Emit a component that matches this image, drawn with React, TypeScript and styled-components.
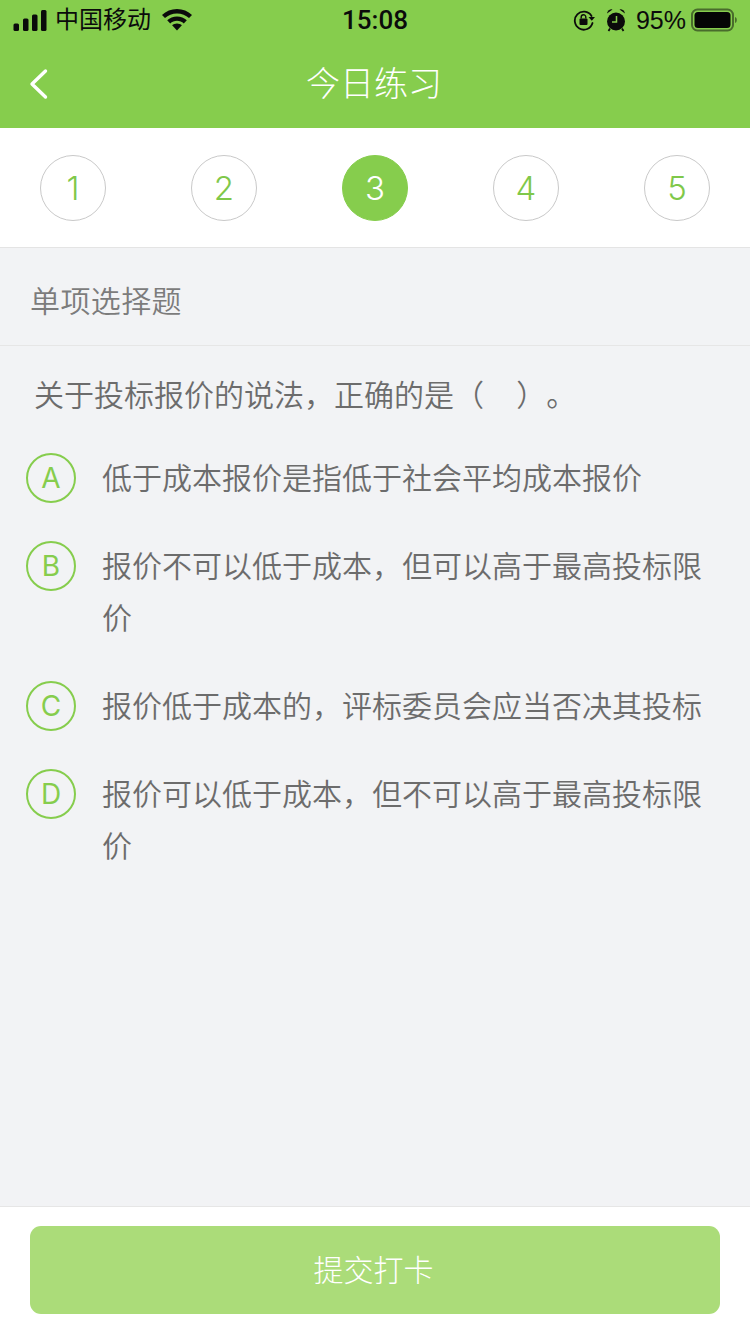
import React from "react";
import styled, { createGlobalStyle } from "styled-components";

const GlobalStyle = createGlobalStyle`
  html, body {
    margin: 0;
    padding: 0;
    background: #f2f3f5;
  }
  * {
    box-sizing: border-box;
  }
`;

const FONT = `"Liberation Sans", "Noto Sans CJK SC", sans-serif`;
const LATIN_LIGHT = `Inter, "Liberation Sans", sans-serif`;

const steps = [1, 2, 3, 4, 5];
const activeStep = 3;

const options = [
  { key: "A", text: "低于成本报价是指低于社会平均成本报价" },
  { key: "B", text: "报价不可以低于成本，但可以高于最高投标限价" },
  { key: "C", text: "报价低于成本的，评标委员会应当否决其投标" },
  { key: "D", text: "报价可以低于成本，但不可以高于最高投标限价" },
];

const SignalIcon = () => (
  <svg width="34" height="21" viewBox="0 0 34 21" fill="#0b0b0b">
    <rect x="0.500" y="13.500" width="5.500" height="7.500" rx="1.500" />
    <rect x="10" y="8.500" width="5.500" height="12.500" rx="1.500" />
    <rect x="19" y="4.500" width="5.500" height="16.500" rx="1.500" />
    <rect x="28" y="0" width="5.500" height="21" rx="1.500" />
  </svg>
);

const WifiIcon = () => (
  <svg width="30" height="22" viewBox="0 0 30 22" fill="#0b0b0b">
    <path d="M15 0C9.200 0 4 2.200 0 5.900l3 3.100C6.100 6.100 10.300 4.400 15 4.400s8.900 1.700 12 4.600l3-3.100C26 2.200 20.800 0 15 0z" />
    <path d="M15 7.400c-3.800 0-7.200 1.400-9.800 3.800l3 3.200c1.800-1.700 4.200-2.700 6.800-2.700s5 1 6.800 2.700l3-3.200c-2.600-2.400-6-3.800-9.800-3.800z" />
    <path d="M15 14.400c-1.900 0-3.600 0.700-4.900 1.900L15 21.500l4.900-5.200c-1.300-1.200-3-1.900-4.900-1.900z" />
  </svg>
);

const RotationLockIcon = () => (
  <svg width="22" height="22" viewBox="0 0 22 22" fill="none">
    <path
      d="M18.500 7A9 9 0 1 0 19.500 14"
      stroke="#0b0b0b"
      strokeWidth="1.800"
      strokeLinecap="round"
    />
    <path d="M15.500 8h6.500l-3.200 3.800z" fill="#0b0b0b" />
    <rect x="6.500" y="9.500" width="8" height="6.500" rx="1" fill="#0b0b0b" />
    <path
      d="M8.200 9.500V8a2.300 2.300 0 0 1 4.600 0v1.500"
      stroke="#0b0b0b"
      strokeWidth="1.400"
    />
  </svg>
);

const AlarmIcon = () => (
  <svg width="22" height="24" viewBox="0 0 22 24" fill="none">
    <circle cx="11" cy="13.500" r="9" fill="#0b0b0b" />
    <path d="M2 5.500 A4.500 4.500 0 0 1 7.500 1.500 Z" fill="#0b0b0b" />
    <path d="M20 5.500 A4.500 4.500 0 0 0 14.500 1.500 Z" fill="#0b0b0b" />
    <path d="M5 20.500l-1.500 2.500M17 20.500l1.500 2.500" stroke="#0b0b0b" strokeWidth="1.800" />
    <path d="M11.500 8V14H7" stroke="#86cd4d" strokeWidth="1.500" />
  </svg>
);

const BatteryIcon = () => (
  <svg width="46" height="24" viewBox="0 0 46 24" fill="none">
    <rect
      x="1"
      y="1.500"
      width="41"
      height="21"
      rx="5.500"
      stroke="#0b0b0b"
      strokeOpacity="0.5"
      strokeWidth="2"
    />
    <rect x="3.500" y="4" width="36" height="16" rx="3.500" fill="#050505" />
    <path d="M44 9c1.200 0.400 1.800 1.500 1.800 3s-0.600 2.600-1.800 3z" fill="#0b0b0b" fillOpacity="0.5" />
  </svg>
);

const BackIcon = () => (
  <svg width="20" height="32" viewBox="0 0 20 32" fill="none">
    <path
      d="M16.500 3L3 16l13.500 13"
      stroke="#ffffff"
      strokeWidth="3.400"
      strokeLinecap="round"
      strokeLinejoin="round"
    />
  </svg>
);

export default function App() {
  return (
    <>
      <GlobalStyle />
      <Page>
        <Header>
          <StatusBar>
            <StatusSide>
              <SignalIcon />
              <Carrier>中国移动</Carrier>
              <WifiIcon />
            </StatusSide>
            <Clock>15:08</Clock>
            <StatusRight>
              <RotationLockIcon />
              <AlarmIcon />
              <Percent>95%</Percent>
              <BatteryIcon />
            </StatusRight>
          </StatusBar>
          <NavBar>
            <BackButton>
              <BackIcon />
            </BackButton>
            <Title>今日练习</Title>
          </NavBar>
        </Header>

        <StepBar>
          {steps.map((n) => (
            <Step key={n} $active={n === activeStep}>
              {n}
            </Step>
          ))}
        </StepBar>

        <Main>
          <TypeLabel>单项选择题</TypeLabel>
          <Question>关于投标报价的说法，正确的是（&nbsp;&nbsp;&nbsp;）。</Question>
          <OptionList>
            {options.map((o) => (
              <OptionRow key={o.key}>
                <OptionMark>{o.key}</OptionMark>
                <OptionText>{o.text}</OptionText>
              </OptionRow>
            ))}
          </OptionList>
        </Main>

        <Footer>
          <SubmitButton>提交打卡</SubmitButton>
        </Footer>
      </Page>
    </>
  );
}

const Page = styled.div`
  width: 750px;
  height: 1334px;
  display: flex;
  flex-direction: column;
  overflow: hidden;
  background-color: #f2f3f5;
  font-family: ${FONT};
`;

const Header = styled.header`
  height: 128px;
  background-color: #86cd4d;
`;

const StatusBar = styled.div`
  height: 40px;
  padding: 0 13px 0 13px;
  display: flex;
  align-items: center;
  justify-content: space-between;
  color: #0b0b0b;
`;

const StatusSide = styled.div`
  display: flex;
  align-items: center;
  width: 222px;

  svg:last-child {
    margin-left: 11px;
  }
`;

const Carrier = styled.span`
  margin-left: 8px;
  font-size: 24px;
  line-height: 40px;
`;

const Clock = styled.span`
  font-family: Roboto, "Liberation Sans", sans-serif;
  font-size: 26px;
  font-weight: 500;
  line-height: 40px;
`;

const StatusRight = styled.div`
  display: flex;
  align-items: center;
  justify-content: flex-end;
  gap: 10px;
  width: 222px;
`;

const Percent = styled.span`
  margin: 0 -5px 0 -1px;
  font-size: 25px;
  line-height: 40px;
`;

const NavBar = styled.div`
  height: 88px;
  position: relative;
  display: flex;
  align-items: center;
  justify-content: center;
`;

const BackButton = styled.div`
  position: absolute;
  left: 29px;
  top: 28px;
  display: flex;
`;

const Title = styled.h1`
  margin: 0 2px 0 0;
  padding-bottom: 5px;
  font-size: 34px;
  font-weight: 300;
  color: #ffffff;
  font-family: "Noto Sans CJK SC", sans-serif;
`;

const StepBar = styled.div`
  height: 120px;
  padding: 27px 40px 0;
  display: flex;
  justify-content: space-between;
  align-items: flex-start;
  background-color: #ffffff;
  border-bottom: 1px solid #e4e4e4;
`;

const Step = styled.div<{ $active?: boolean }>`
  width: 66px;
  height: 66px;
  border-radius: 50%;
  display: flex;
  align-items: center;
  justify-content: center;
  font-family: ${LATIN_LIGHT};
  font-size: 33px;
  font-weight: 350;
  color: ${(p) => (p.$active ? "#ffffff" : "#7fc84a")};
  background-color: ${(p) => (p.$active ? "#86cd4d" : "#ffffff")};
  border: 1px solid ${(p) => (p.$active ? "#86cd4d" : "#c9c9c9")};
`;

const Main = styled.main`
  flex: 1;
  display: flex;
  flex-direction: column;
  min-height: 0;
`;

const TypeLabel = styled.div`
  height: 98px;
  padding: 4px 0 0 30px;
  display: flex;
  align-items: center;
  font-size: 30px;
  font-weight: 350;
  letter-spacing: 0.400px;
  color: #7c7c7c;
  border-bottom: 1px solid #e6e6e6;
`;

const Question = styled.div`
  padding: 24px 0 0 34px;
  font-size: 30px;
  line-height: 52px;
  font-weight: 350;
  word-spacing: 2.400px;
  text-spacing-trim: space-all;
  color: #6c6c6c;
`;

const OptionList = styled.div`
  margin-top: 30px;
  padding: 0 40px 0 26px;
  display: flex;
  flex-direction: column;
  gap: 36px;
`;

const OptionRow = styled.div`
  display: flex;
  align-items: flex-start;
  gap: 26px;
`;

const OptionMark = styled.div`
  flex: none;
  width: 50px;
  height: 50px;
  margin-top: 1px;
  border-radius: 50%;
  border: 2px solid #86cd4d;
  display: flex;
  align-items: center;
  justify-content: center;
  font-family: ${LATIN_LIGHT};
  font-size: 28px;
  font-weight: 400;
  color: #86cd4d;
`;

const OptionText = styled.div`
  flex: 1;
  padding-top: 1px;
  margin-bottom: -1px;
  font-size: 30px;
  line-height: 52px;
  font-weight: 350;
  color: #6c6c6c;
`;

const Footer = styled.footer`
  height: 128px;
  padding: 19px 30px 0;
  background-color: #ffffff;
  border-top: 1px solid #e6e6e6;
`;

const SubmitButton = styled.button`
  width: 690px;
  height: 88px;
  display: block;
  padding: 0 3px 4px 0;
  border: none;
  outline: none;
  border-radius: 11px;
  background-color: #abdc79;
  color: #ffffff;
  font-family: "Noto Sans CJK SC", sans-serif;
  font-size: 30px;
  font-weight: 300;
`;
